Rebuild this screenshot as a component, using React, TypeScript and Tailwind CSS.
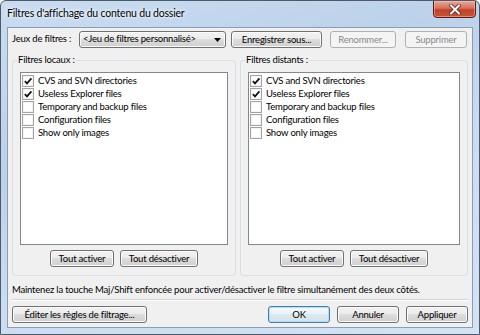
import { useState } from "react";

const FILTRES = [
  { nom: "CVS and SVN directories", actif: true },
  { nom: "Useless Explorer files", actif: true },
  { nom: "Temporary and backup files", actif: false },
  { nom: "Configuration files", actif: false },
  { nom: "Show only images", actif: false },
];

const BTN_NORMAL =
  "border-[#707070] bg-[linear-gradient(#f2f2f2_0%,#ebebeb_50%,#dddddd_50%,#cfcfcf_100%)] shadow-[inset_0_0_0_1px_#fbfbfb] text-black";
const BTN_DEFAUT =
  "border-[#3c7fb1] bg-[linear-gradient(#f4f9fc_0%,#e9f2f8_50%,#dde9f1_50%,#d2e1eb_100%)] shadow-[inset_0_0_0_1px_#b6dcf2] text-black";
const BTN_INACTIF = "border-[#adb2b5] bg-[#f4f4f4] text-[#8a8a8a]";

function Bouton({
  children,
  className = "",
  inactif = false,
  defaut = false,
}: {
  children: React.ReactNode;
  className?: string;
  inactif?: boolean;
  defaut?: boolean;
}) {
  const style = inactif ? BTN_INACTIF : defaut ? BTN_DEFAUT : BTN_NORMAL;
  return (
    <button
      type="button"
      disabled={inactif}
      className={`flex h-[17px] shrink-0 items-center justify-center rounded-[3px] border leading-none ${style} ${className}`}
    >
      {children}
    </button>
  );
}

function Coche({ actif, onClick }: { actif: boolean; onClick: () => void }) {
  return (
    <span
      onClick={onClick}
      className="flex h-[12px] w-[12px] shrink-0 items-center justify-center border border-[#a4a4a4] bg-white shadow-[inset_0_0_0_1px_#f3f3f3]"
    >
      {actif && (
        <svg width="10" height="10" viewBox="0 0 10 10">
          <path d="M1.8 5.2 L4 7.4 L8.4 2.4" fill="none" stroke="#111" strokeWidth="1.7" />
        </svg>
      )}
    </span>
  );
}

function Groupe({ titre, className = "" }: { titre: string; className?: string }) {
  const [etats, setEtats] = useState(FILTRES.map((f) => f.actif));

  const basculer = (i: number) =>
    setEtats((prev) => prev.map((v, j) => (j === i ? !v : v)));

  return (
    <fieldset className={`rounded-[3px] border border-[#d5dfe5] px-[7px] pb-[8px] ${className}`}>
      <legend className="ml-[-3px] px-[1px] leading-[12px]">{titre}</legend>
      <div className="mt-[6px] h-[173px] border border-[#828790] bg-white pl-[1px] pt-[1px]">
        {FILTRES.map((f, i) => (
          <div key={f.nom} className="flex h-[13px] items-center gap-[4px]">
            <Coche actif={etats[i]} onClick={() => basculer(i)} />
            <span className="leading-[13px]">{f.nom}</span>
          </div>
        ))}
      </div>
      <div className="mt-[5px] flex justify-center gap-[6px]">
        <Bouton className="w-[64px]">Tout activer</Bouton>
        <Bouton className="w-[78px]">Tout désactiver</Bouton>
      </div>
    </fieldset>
  );
}

export default function App() {
  return (
    <div
      className="relative flex h-[335px] w-[480px] flex-col overflow-hidden rounded-t-[6px] border border-[#4d5a69] bg-[linear-gradient(160deg,#c9dcf1_0%,#bcd2ea_35%,#cadcf0_60%,#d4e3f4_100%)] text-[9.5px] tracking-[-0.2px] text-black"
      style={{ fontFamily: "Lato, 'Liberation Sans', sans-serif" }}
    >
      <div className="flex h-[26px] items-center pl-[6px] text-[10.5px] [text-shadow:0_0_6px_#ffffff,0_0_3px_#ffffff]">
        Filtres d'affichage du contenu du dossier
      </div>

      <div className="absolute right-[3px] top-[-1px] flex h-[18px] w-[43px] items-center justify-center rounded-b-[4px] border border-[#5a1a10] bg-[linear-gradient(#e9a99a_0%,#d7705c_45%,#c2402a_55%,#c95136_100%)] shadow-[inset_0_0_0_1px_rgba(255,200,190,0.5)]">
        <svg width="12" height="11" viewBox="0 0 12 11">
          <path d="M2 1.5 L10 9.5 M10 1.5 L2 9.5" stroke="#5b1e14" strokeWidth="3.6" strokeLinecap="square" />
          <path d="M2 1.5 L10 9.5 M10 1.5 L2 9.5" stroke="#ffffff" strokeWidth="2" strokeLinecap="square" />
        </svg>
      </div>

      <div className="mx-[6px] mb-[6px] flex flex-1 flex-col border border-[#8a9db4] bg-[#f0f0f0] px-[3px] pb-[3px] pt-[3px]">
        <div className="flex items-center">
          <span className="w-[68px] pl-[1px]">Jeux de filtres :</span>
          <div className="flex h-[17px] w-[147px] items-center justify-between rounded-[3px] border border-[#707070] bg-[linear-gradient(#f2f2f2_0%,#ebebeb_50%,#dddddd_50%,#cfcfcf_100%)] pl-[3px] pr-[4px] shadow-[inset_0_0_0_1px_#fbfbfb]">
            <span>&lt;Jeu de filtres personnalisé&gt;</span>
            <svg width="7" height="4" viewBox="0 0 7 4">
              <path d="M0 0 H7 L3.5 4 Z" fill="#000" />
            </svg>
          </div>
          <Bouton className="ml-[5px] w-[91px]">Enregistrer sous...</Bouton>
          <Bouton inactif className="ml-[8px] w-[66px]">Renommer...</Bouton>
          <Bouton inactif className="ml-[9px] w-[62px]">Supprimer</Bouton>
        </div>

        <div className="mt-[6px] flex gap-[4px] px-[1px]">
          <Groupe titre="Filtres locaux :" className="w-[224px]" />
          <Groupe titre="Filtres distants :" className="flex-1" />
        </div>

        <p className="mt-[8px] pl-[1px] leading-[12px]">
          Maintenez la touche Maj/Shift enfoncée pour activer/désactiver le filtre simultanément des deux côtés.
        </p>

        <div className="mx-[1px] mt-[3px] border-b border-t border-b-white border-t-[#d5d5d5]" />

        <div className="mt-[5px] flex items-center px-[1px]">
          <Bouton className="w-[135px]">Éditer les règles de filtrage...</Bouton>
          <div className="ml-auto flex gap-[7px]">
            <Bouton defaut className="w-[62px]">OK</Bouton>
            <Bouton className="w-[62px]">Annuler</Bouton>
            <Bouton className="w-[62px]">Appliquer</Bouton>
          </div>
        </div>
      </div>
    </div>
  );
}
